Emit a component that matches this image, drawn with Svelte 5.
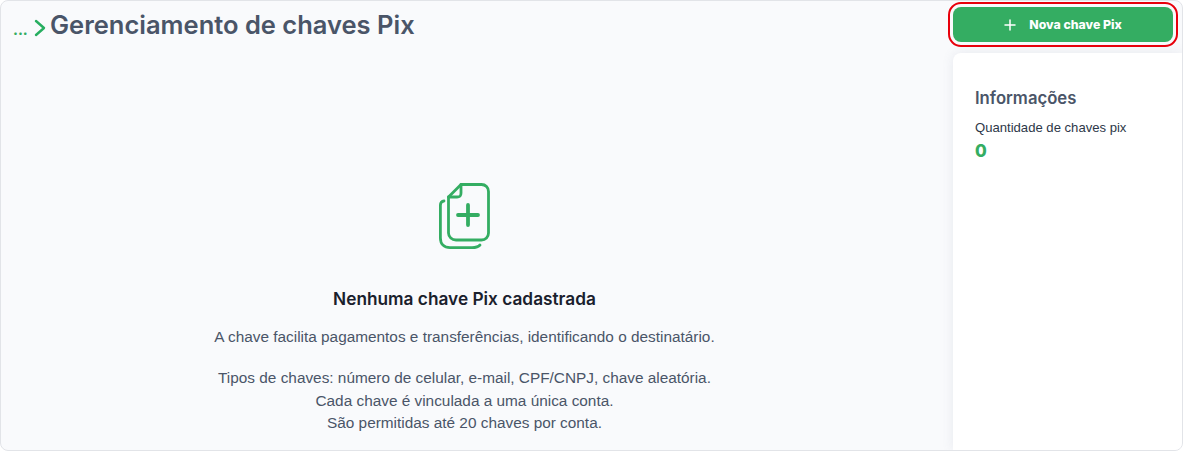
<script lang="ts">
    const tips = [
        'Tipos de chaves: número de celular, e-mail, CPF/CNPJ, chave aleatória.',
        'Cada chave é vinculada a uma única conta.',
        'São permitidas até 20 chaves por conta.'
    ];
</script>

<div class="shell">
    <main class="content">
        <header class="crumbs">
            <span class="dots">...</span>
            <svg class="chevron" width="12" height="18" viewBox="0 0 12 18" fill="none">
                <path d="M2 2l8 7-8 7" stroke="#27ae60" stroke-width="2.4" stroke-linecap="round" stroke-linejoin="round" />
            </svg>
            <h1>Gerenciamento de chaves Pix</h1>
        </header>

        <section class="empty">
            <svg class="file-icon" width="52" height="66" viewBox="0 0 52 66" fill="none" stroke="#34ad62" stroke-width="2.8" stroke-linecap="round" stroke-linejoin="round">
                <path d="M5 18c-2.4 0-3.6 1.500-3.600 4v33c0 6 3.600 9.600 9.600 9.600h22c4 0 6.500-.8 8-2.600" />
                <path d="M22 1.500h20.500c4 0 7 3 7 7V50c0 4-3 7-7 7H17c-4 0-7.500-3-7.500-7V14z" />
                <path d="M22 1.500V10c0 3-1 4-4 4H9.500" />
                <path d="M29 22v20M19 32h20" stroke-width="3.800" />
            </svg>
            <h2>Nenhuma chave Pix cadastrada</h2>
            <p class="lead">A chave facilita pagamentos e transferências, identificando o destinatário.</p>
            <div class="tips">
                {#each tips as tip}
                    <p>{tip}</p>
                {/each}
            </div>
        </section>
    </main>

    <aside class="side">
        <button class="new-key" type="button">
            <svg width="12" height="12" viewBox="0 0 12 12" fill="none">
                <path d="M6 1v10M1 6h10" stroke="#fff" stroke-width="1.500" stroke-linecap="round" />
            </svg>
            <span>Nova chave Pix</span>
        </button>
        <div class="info-card">
            <h3>Informações</h3>
            <p class="info-label">Quantidade de chaves pix</p>
            <p class="info-value">0</p>
        </div>
    </aside>
</div>

<style>
    :global(body) {
        margin: 0;
        background: #fff;
    }

    .shell {
        box-sizing: border-box;
        width: 1183px;
        height: 451px;
        display: flex;
        overflow: hidden;
        border: 1px solid #e2e4e8;
        border-radius: 8px;
        background: #f9fafc;
        font-family: "Liberation Sans", Arial, sans-serif;
    }

    .content {
        flex: 1;
        min-width: 0;
        padding-right: 25px;
    }

    .crumbs {
        display: flex;
        align-items: center;
        height: 50px;
        padding-left: 12px;
    }

    .dots {
        font-family: Inter, sans-serif;
        font-weight: 800;
        font-size: 14px;
        color: #34ad62;
        width: 21px;
        padding-top: 6px;
    }

    .chevron {
        margin-right: 4px;
        margin-top: 4px;
    }

    h1 {
        margin: 0;
        padding-bottom: 3px;
        font-family: Inter, sans-serif;
        font-size: 25.5px;
        font-weight: 600;
        color: #4a5568;
    }

    .empty {
        display: flex;
        flex-direction: column;
        align-items: center;
        padding-top: 132px;
        color: #4a5568;
        font-size: 15.37px;
    }

    h2 {
        margin: 39px 0 0;
        font-family: Inter, sans-serif;
        font-size: 17.25px;
        font-weight: 600;
        color: #1a202c;
    }

    .lead {
        margin: 17px 0 0;
        line-height: 21px;
    }

    .tips {
        margin-top: 20px;
        text-align: center;
    }

    .tips p {
        margin: 0;
        line-height: 22.5px;
    }

    .side {
        width: 229px;
        display: flex;
        flex-direction: column;
        padding-top: 6px;
    }

    .new-key {
        width: 220px;
        height: 35px;
        display: flex;
        align-items: center;
        justify-content: center;
        gap: 13px;
        border: 0;
        border-radius: 8px;
        background: #34ad62;
        color: #fff;
        font-family: Inter, sans-serif;
        font-size: 12.3px;
        font-weight: 800;
        outline: 2px solid #e8000b;
        outline-offset: 3px;
    }

    .info-card {
        flex: 1;
        margin-top: 11px;
        padding: 35px 22px 0;
        background: #fff;
        border-radius: 8px 0 0 0;
        box-shadow: 0 0 12px rgba(100, 110, 140, 0.12);
    }

    h3 {
        margin: 0;
        font-family: Inter, sans-serif;
        font-size: 16.7px;
        font-weight: 600;
        color: #4a5568;
    }

    .info-label {
        margin: 12px 0 0;
        font-size: 13.1px;
        color: #2d3748;
    }

    .info-value {
        margin: 6px 0 0;
        font-family: Inter, sans-serif;
        font-size: 17px;
        font-weight: 800;
        color: #34ad62;
    }
</style>
